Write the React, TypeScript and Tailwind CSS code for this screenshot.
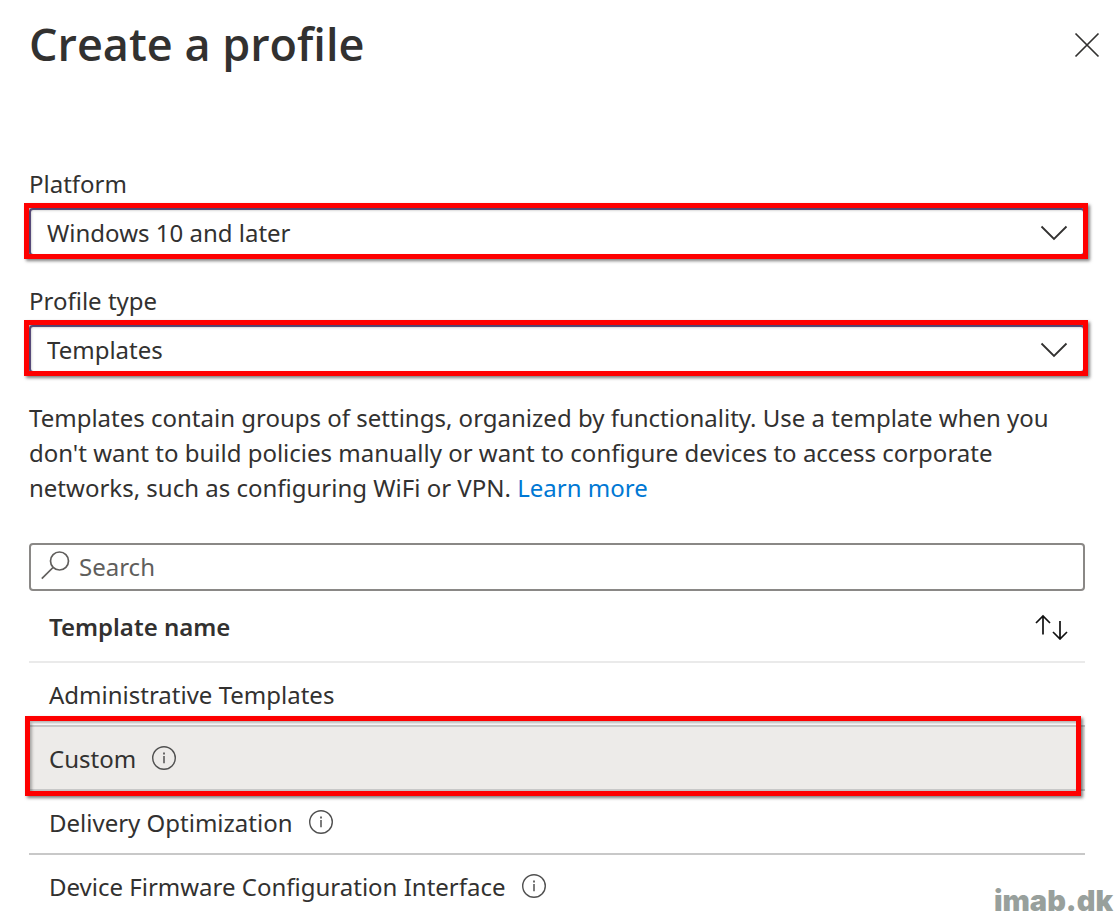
import React from "react";

type Template = { name: string; info: boolean; selected?: boolean };

const templates: Template[] = [
  { name: "Administrative Templates", info: false },
  { name: "Custom", info: true, selected: true },
  { name: "Delivery Optimization", info: true },
  { name: "Device Firmware Configuration Interface", info: true },
];

function InfoIcon() {
  return (
    <svg viewBox="0 0 24 24" className="size-6" fill="none" stroke="#505050" aria-hidden="true">
      <circle cx="12" cy="12" r="11.3" strokeWidth="1.4" />
      <path d="M12 10v7.2" strokeWidth="1.5" />
      <path d="M12 6.6v1.8" strokeWidth="1.7" />
    </svg>
  );
}

function Highlight({ className }: { className: string }) {
  return (
    <div
      className={`pointer-events-none absolute border-5 border-[#fe0000] shadow-[2px_2px_3px_rgba(0,0,0,0.5),inset_2px_2px_3px_rgba(0,0,0,0.3)] ${className}`}
    />
  );
}

function SelectField({ id, label, value }: { id: string; label: string; value: string }) {
  return (
    <div>
      <label htmlFor={id} className="block pb-[7px]">
        {label}
      </label>
      <div className="relative">
        <select
          id={id}
          defaultValue={value}
          className="block h-12 w-full appearance-none rounded-sm border-2 border-[#6b5b95] bg-white pl-4 pr-16 pt-px outline-none"
        >
          <option>{value}</option>
        </select>
        <svg
          viewBox="0 0 28 16"
          className="pointer-events-none absolute right-[17px] top-[17px] h-4 w-7"
          fill="none"
          stroke="#323130"
          strokeWidth="1.8"
          aria-hidden="true"
        >
          <path d="M1.5 1.5 14 14 26.5 1.5" />
        </svg>
        <Highlight className="-bottom-[3px] -left-[5px] -right-[3px] -top-[5px]" />
      </div>
    </div>
  );
}

export default function App() {
  return (
    <main className="relative h-screen overflow-hidden bg-white pl-[29px] pr-8 font-['Noto_Sans','Open_Sans',sans-serif] text-[24px] leading-[35px] text-[#323130]">
      <header className="-mr-4 flex items-center justify-between pt-3">
        <h1 className="font-['Open_Sans','Noto_Sans',sans-serif] text-[45px] font-semibold leading-[64px]">
          Create a profile
        </h1>
        <button type="button" aria-label="Close" className="flex size-7 items-center justify-center">
          <svg viewBox="0 0 28 28" className="size-7" fill="none" stroke="#323130" strokeWidth="1.7" aria-hidden="true">
            <path d="M2.5 3.5 25.5 26.5M25.5 3.5 2.5 26.5" />
          </svg>
        </button>
      </header>

      <form className="mt-[90px] flex flex-col gap-[27px]">
        <SelectField id="platform" label="Platform" value="Windows 10 and later" />
        <SelectField id="profile-type" label="Profile type" value="Templates" />
      </form>

      <p className="mt-[27px]">
        Templates contain groups of settings, organized by functionality. Use a template when you
        don't want to build policies manually or want to configure devices to access corporate
        networks, such as configuring WiFi or VPN.{" "}
        <a href="#learn-more" className="text-[#0078d4]">
          Learn more
        </a>
      </p>

      <label className="mt-[38px] flex h-12 items-center gap-2 rounded-sm border-2 border-[#8a8886] pl-[10px] pr-3">
        <svg viewBox="0 0 30 30" className="mb-1 size-[30px] shrink-0" fill="none" stroke="#605e5c" strokeWidth="1.7" aria-hidden="true">
          <circle cx="18.5" cy="11" r="9" />
          <path d="M12 17.500 .8 28.700" />
        </svg>
        <input
          type="search"
          aria-label="Search"
          placeholder="Search"
          className="w-full min-w-0 bg-transparent pb-0.5 outline-none placeholder:text-[#605e5c]"
        />
      </label>

      <table className="w-full border-separate border-spacing-0">
        <thead>
          <tr>
            <th scope="col" className="h-[72px] border-b-2 border-[#eaeaea] pl-5 pr-4 text-left font-semibold">
              <div className="flex items-center justify-between">
                Template name
                <button type="button" aria-label="Sort by template name">
                  <svg viewBox="0 0 34 28" className="h-7 w-[34px]" fill="none" stroke="#111" strokeWidth="1.7" aria-hidden="true">
                    <path d="M8 22.500V4M1 11l7-7 7 7" />
                    <path d="M25 9v18M18 20l7 7 7-7" />
                  </svg>
                </button>
              </div>
            </th>
          </tr>
        </thead>
        <tbody>
          {templates.map((t) => (
            <tr key={t.name}>
              <td
                className={`relative h-16 border-b-2 border-[#c8c8c8] pl-5 ${t.selected ? "bg-[#edebe9]" : ""}`}
              >
                <div className="flex items-center gap-4">
                  {t.name}
                  {t.info && <InfoIcon />}
                </div>
                {t.selected && <Highlight className="-bottom-[7px] -left-1 -top-[11px] right-1" />}
              </td>
            </tr>
          ))}
        </tbody>
      </table>

      <div className="absolute bottom-0 right-1 font-['Inter',sans-serif] text-[29px] font-black leading-6 text-[#98a09c]">
        imab.dk
      </div>
    </main>
  );
}
